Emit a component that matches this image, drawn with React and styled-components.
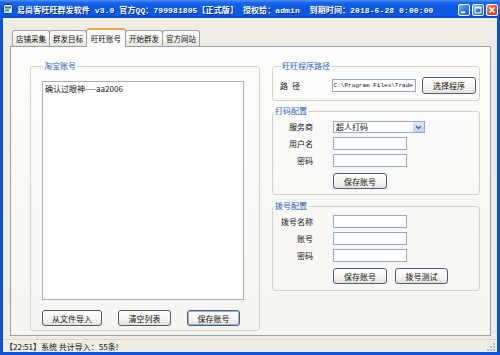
import React from 'react';
import styled, { createGlobalStyle, css } from 'styled-components';

const GlobalStyle = createGlobalStyle`
  html, body {
    margin: 0;
    padding: 0;
    background: #0b4fd4;
  }
  * {
    box-sizing: border-box;
  }
`;

const uiFont = `"Noto Sans CJK SC", "Liberation Sans", sans-serif`;

const Window = styled.div`
  width: 500px;
  height: 355px;
  display: flex;
  flex-direction: column;
  background: #0b52dc;
  font-family: ${uiFont};
  font-size: 8px;
  color: #111;
  overflow: hidden;
`;

const TitleBar = styled.div`
  height: 18px;
  flex-shrink: 0;
  display: flex;
  align-items: center;
  padding: 0 2px 0 3px;
  background: linear-gradient(180deg, #4d93f5 0%, #1c68ea 14%, #0a58e2 45%, #0b5be8 80%, #0a4ccc 100%);
`;

const TitleIcon = styled.svg`
  width: 10px;
  height: 10px;
  flex-shrink: 0;
  margin-right: 4px;
`;

const TitleText = styled.div`
  flex: 1;
  color: #fff;
  font-family: "Liberation Mono", "Noto Sans CJK SC", monospace;
  font-weight: 700;
  font-size: 8px;
  white-space: pre;
  text-shadow: 1px 1px 0 #0a2a80;
  letter-spacing: 0.1px;
`;

const CaptionButtons = styled.div`
  display: flex;
  gap: 2px;
  margin-top: 1px;
`;

const CaptionButton = styled.div`
  width: 12px;
  height: 12px;
  border: 1px solid #fff;
  border-radius: 2px;
  display: flex;
  align-items: center;
  justify-content: center;
  background: ${p => (p.$close
    ? 'linear-gradient(135deg, #f3a48a 0%, #e2582f 45%, #c8401c 100%)'
    : 'linear-gradient(135deg, #8ab6fa 0%, #3a7ef0 45%, #2460d8 100%)')};
`;

const Body = styled.div`
  flex: 1;
  margin: 0 3px 3px;
  background: #efede5;
  display: flex;
  flex-direction: column;
  padding-top: 10px;
`;

const TabStrip = styled.div`
  height: 18px;
  display: flex;
  align-items: flex-end;
  padding-left: 9px;
`;

const Tab = styled.div`
  height: 16px;
  padding: 0 3px;
  display: flex;
  align-items: center;
  justify-content: center;
  font-size: 7.5px;
  border: 1px solid #9aa3a4;
  border-bottom: none;
  border-radius: 3px 3px 0 0;
  background: linear-gradient(180deg, #ffffff 0%, #f3f2ec 60%, #e6e4dc 100%);
  margin-right: -1px;
  ${p => p.$active && css`
    height: 19px;
    padding: 0 4px;
    margin-bottom: -1px;
    position: relative;
    z-index: 1;
    border-top: 2px solid #f0a53a;
    background: #fbfbf9;
  `}
`;

const Panel = styled.div`
  height: 290px;
  margin: 0 6px 0 7px;
  border: 1px solid #9aa3a4;
  background: linear-gradient(180deg, #fcfcfb 0%, #f6f5f1 100%);
  display: flex;
  gap: 12px;
  padding: 14px 10px 4px 19px;
`;

const Group = styled.fieldset`
  margin: ${p => p.$mt || 0}px 0 0;
  padding: ${p => p.$pad || '4px 8px 6px'};
  border: 1px solid #d6d3c6;
  border-radius: 3px;
  min-width: 0;
`;

const Legend = styled.legend`
  color: #2b5fc0;
  font-size: 8px;
  padding: 0 1px;
  margin-left: 1px;
  line-height: 10px;
`;

const LeftGroup = styled(Group)`
  width: 230px;
  display: flex;
  flex-direction: column;
`;

const ListBox = styled.div`
  height: 219px;
  flex-shrink: 0;
  background: #fff;
  border: 1px solid #a7adb6;
  padding: 1px 2px;
  font-size: 8px;
  line-height: 11px;
`;

const ButtonRow = styled.div`
  display: flex;
  gap: ${p => p.$gap || '16px'};
  margin-top: ${p => p.$top || '0'};
`;

const Button = styled.button`
  height: ${p => p.$h || 16}px;
  width: ${p => p.$w || 54}px;
  flex-shrink: 0;
  padding: 0;
  font-family: ${uiFont};
  font-size: 8px;
  color: #111;
  border: 1px solid #4a5f7e;
  border-radius: 3px;
  background: linear-gradient(180deg, #ffffff 0%, #f4f3ee 60%, #e3e0d6 100%);
  ${p => p.$focus && css`
    box-shadow: inset 0 0 0 1px #9db3da;
  `}
`;

const RightColumn = styled.div`
  width: 208px;
  display: flex;
  flex-direction: column;
`;

const PathRow = styled.div`
  display: flex;
  align-items: center;
  gap: 6px;
  height: 18px;
`;

const PathLabel = styled.span`
  width: 46px;
  letter-spacing: 4px;
`;

const FormGrid = styled.div`
  display: grid;
  grid-template-columns: 40px 1fr;
  column-gap: 20px;
  row-gap: 4px;
  align-items: center;
`;

const Label = styled.span`
  text-align: right;
  line-height: 12px;
`;

const Input = styled.div`
  width: ${p => p.$w || 74}px;
  height: 13px;
  background: #fff;
  border: 1px solid #95a9c4;
  padding: 0 1px;
  font-family: "Liberation Mono", monospace;
  font-size: 6px;
  line-height: 11px;
  white-space: nowrap;
  overflow: hidden;
`;

const Select = styled.div`
  width: 92px;
  height: 12px;
  background: #fff;
  border: 1px solid #95a9c4;
  display: flex;
  align-items: center;
  justify-content: space-between;
  padding-left: 2px;
  line-height: 10px;
`;

const DropButton = styled.div`
  width: 11px;
  height: 10px;
  border-radius: 1px;
  background: linear-gradient(180deg, #dfe8fb 0%, #c2d3f6 100%);
  display: flex;
  align-items: center;
  justify-content: center;
`;

const StatusBar = styled.div`
  flex: 1;
  margin-top: 3px;
  border-top: 1px solid #d8d5c8;
  display: flex;
  align-items: center;
  justify-content: space-between;
  padding: 0 1px 0 2px;
  font-size: 8px;
`;

const Grip = styled.svg`
  width: 10px;
  height: 10px;
  align-self: flex-end;
`;

export default function App() {
  return (
    <>
      <GlobalStyle />
      <Window>
        <TitleBar>
          <TitleIcon viewBox="0 0 10 10">
            <rect x="0.5" y="0.5" width="9" height="9" rx="1.5" fill="#e8f0ff" stroke="#0a3aa0" />
            <rect x="2" y="2.5" width="6" height="2" fill="#2a6ae0" />
            <rect x="2" y="5.5" width="4" height="2" fill="#3aa050" />
          </TitleIcon>
          <TitleText>{'易尚客旺旺群发软件 v3.0 官方QQ：799981805【正式版】 授权给：admin  到期时间：2018-6-28 0:00:00'}</TitleText>
          <CaptionButtons>
            <CaptionButton>
              <svg width="8" height="8" viewBox="0 0 8 8"><rect x="1" y="5.5" width="4" height="1.6" fill="#fff" /></svg>
            </CaptionButton>
            <CaptionButton>
              <svg width="8" height="8" viewBox="0 0 8 8"><rect x="1" y="1" width="6" height="6" fill="none" stroke="#fff" strokeWidth="1" /><rect x="1" y="1" width="6" height="1.5" fill="#fff" /></svg>
            </CaptionButton>
            <CaptionButton $close>
              <svg width="8" height="8" viewBox="0 0 8 8"><path d="M1.5 1.5 L6.5 6.5 M6.5 1.5 L1.5 6.5" stroke="#fff" strokeWidth="1.5" /></svg>
            </CaptionButton>
          </CaptionButtons>
        </TitleBar>

        <Body>
          <TabStrip>
            <Tab>店铺采集</Tab>
            <Tab>群发目标</Tab>
            <Tab $active>旺旺账号</Tab>
            <Tab>开始群发</Tab>
            <Tab>官方网站</Tab>
          </TabStrip>

          <Panel>
            <LeftGroup $pad="10px 15px 4px 11px">
              <Legend>淘宝账号</Legend>
              <ListBox>确认过眼神----aa2006</ListBox>
              <ButtonRow $gap="16px" $top="10px">
                <Button $w={60}>从文件导入</Button>
                <Button $w={53}>清空列表</Button>
                <Button $w={53} $focus>保存账号</Button>
              </ButtonRow>
            </LeftGroup>

            <RightColumn>
              <Group $pad="5px 3px 6px 7px">
                <Legend>旺旺程序路径</Legend>
                <PathRow>
                  <PathLabel>路径</PathLabel>
                  <Input $w={85}>C:\Program Files\Trade</Input>
                  <Button $w={54} $h={17}>选择程序</Button>
                </PathRow>
              </Group>

              <Group $mt={5} $pad="5px 8px 5px 0">
                <Legend>打码配置</Legend>
                <FormGrid>
                  <Label>服务商</Label>
                  <Select>
                    超人打码
                    <DropButton>
                      <svg width="7" height="5" viewBox="0 0 7 5"><path d="M1 1 L3.5 3.5 L6 1" fill="none" stroke="#3a5aa0" strokeWidth="1.3" /></svg>
                    </DropButton>
                  </Select>
                  <Label>用户名</Label>
                  <Input />
                  <Label>密码</Label>
                  <Input />
                  <span />
                  <Button $w={54} style={{ marginTop: 2 }}>保存账号</Button>
                </FormGrid>
              </Group>

              <Group $mt={6} $pad="4px 8px 6px 0">
                <Legend>拨号配置</Legend>
                <FormGrid>
                  <Label>拨号名称</Label>
                  <Input />
                  <Label>账号</Label>
                  <Input />
                  <Label>密码</Label>
                  <Input />
                  <span />
                  <ButtonRow $gap="8px" $top="2px">
                    <Button $w={54}>保存账号</Button>
                    <Button $w={53}>拨号测试</Button>
                  </ButtonRow>
                </FormGrid>
              </Group>
            </RightColumn>
          </Panel>

          <StatusBar>
            <span>【22:51】系统 共计导入：55条!</span>
            <Grip viewBox="0 0 10 10">
              <g fill="#bdb9a8">
                <rect x="7" y="1" width="2" height="2" />
                <rect x="4" y="4" width="2" height="2" />
                <rect x="7" y="4" width="2" height="2" />
                <rect x="1" y="7" width="2" height="2" />
                <rect x="4" y="7" width="2" height="2" />
                <rect x="7" y="7" width="2" height="2" />
              </g>
            </Grip>
          </StatusBar>
        </Body>
      </Window>
    </>
  );
}
